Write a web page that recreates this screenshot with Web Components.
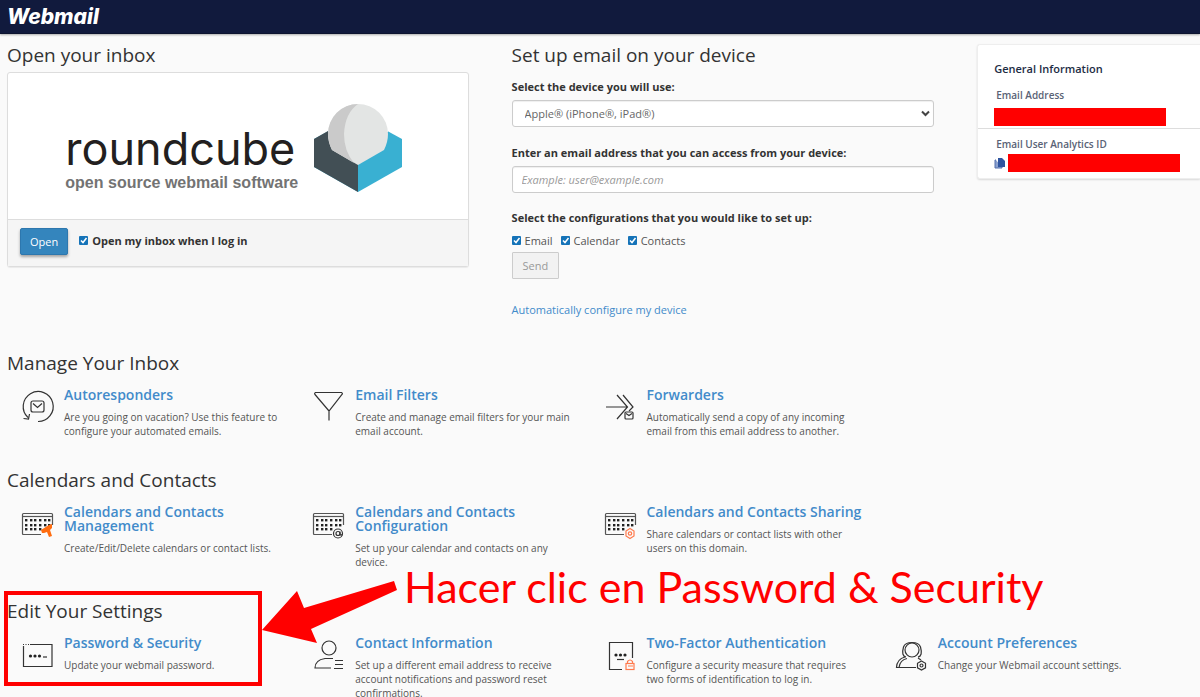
<!DOCTYPE html>
<html lang="en">
<head>
<meta charset="utf-8">
<meta name="viewport" content="width=device-width, initial-scale=1">
<title>Webmail</title>
<style>
html { scrollbar-width: none; }
body { margin: 0; background: #fafafa; color: #333; font: 11px/14px "Open Sans", "Noto Sans", sans-serif; overflow-x: hidden; }
</style>
</head>
<body>
<webmail-app></webmail-app>

<script>
const define = (name, html, setup) => {
  const template = document.createElement('template');
  template.innerHTML = html;
  customElements.define(name, class extends HTMLElement {
    connectedCallback() {
      if (this.shadowRoot) return;
      const root = this.attachShadow({ mode: 'open' });
      root.append(template.content.cloneNode(true));
      if (setup) setup(this, root);
    }
  });
};

/* Dotted calendar sheet shared by the three calendar icons */
const dots = [15, 20, 24].map((y, row) =>
  [5, 10, 14, 19, 24, 28].filter((x) => row < 2 || x < 20)
    .map((x) => `<rect x="${x - 1}" y="${y - 1}" width="2.4" height="2.4" fill="#222" stroke="none"/>`).join('')).join('');
const calendar = `<g stroke="#555"><path d="M20 29.5H2.5q-1 0-1-1V9.500q0-1 1-1h28q1 0 1 1V20"/><path d="M1.500 11.500h30"/></g>${dots}`;

const icons = {
  autoresponder: '<path d="M7 29.500A15 15 0 1 1 17 33.500M2.500 30.500l5 .5 1-5"/><rect x="10" y="13" width="13" height="11" rx="2"/><path d="M12 15.500l4.500 4 4.500-4"/>',
  filter: '<path d="M3.500 4.500h26q1.500 1 .500 2L17 23 3 6.500q-1-1 .5-2zM17 23v9.500"/>',
  forward: '<path d="M2 19h21M13 7l10.500 12L13 31M19 7l10 12-4 4"/><rect x="21" y="24" width="8" height="7" rx="1"/><path d="M22 25.500l3 2 3-2"/>',
  'calendar-manage': calendar + '<path d="M20 25l8-5 3-1v4l-2 2 2 6-3 1-2-5-3 1-2 0z" fill="#ff6c0f" stroke="none"/>',
  'calendar-config': calendar + '<circle cx="26" cy="28.500" r="4.500"/><circle cx="26" cy="28.500" r="2"/><path d="M28 26.500v3q1 1 2 0"/>',
  'calendar-share': calendar + '<g stroke="#ff7a4d"><path d="M26 23.500l4 2.500v5l-4 2.500-4-2.500v-5z"/><circle cx="26" cy="28.500" r="1.700"/></g>',
  password: '<path d="M9 8.500h22v22H2.500V10"/><path d="M2 8.500h7" stroke-dasharray="1 1.500"/><g fill="#222" stroke="none"><circle cx="9.500" cy="20" r="1.600"/><circle cx="14" cy="20" r="1.600"/><circle cx="18.500" cy="20" r="1.600"/></g><path d="M22 21h4"/>',
  contact: '<circle cx="17" cy="12" r="7"/><path d="M19 32H3q0-8 10-9.500h8M23 24.500h8M23 28.500h8M22 32.500h9"/>',
  'two-factor': '<path d="M18 33.500H5.500v-27h23V22"/><g fill="#222" stroke="none"><circle cx="12" cy="19" r="1.600"/><circle cx="16.500" cy="19" r="1.600"/><circle cx="21" cy="19" r="1.600"/></g><path d="M13 23.500h7"/><g stroke="#ff7a4d"><rect x="22" y="27.500" width="8" height="6"/><path d="M23.500 27v-1.500q2.500-3 5 0V27M24 30h5"/></g>',
  preferences: '<circle cx="17" cy="14" r="7"/><path d="M11 21Q6 20 8.500 11 10 6.500 17 6.500T25.500 11Q28 20 23 21M12 22.500Q5 24 4 31.500h17M10 21Q2 23 1.500 31.500H4M23 22l3 2"/><path d="M26.500 25l4 2.300v4.500l-4 2.300-4-2.300v-4.500z"/><circle cx="26.500" cy="29.500" r="1.500"/>'
};

define('app-header', `
<style>
  :host { display: flex; align-items: center; height: 34px; padding: 0 7px; box-sizing: border-box; background: #111a3d; border-bottom: 1px solid #0d1430; box-shadow: 0 1px 2px #aaa; }
  a { color: #fff; text-decoration: none; font: italic 800 21px/30px Inter, "Open Sans", sans-serif; }
</style>
<a href="#">Webmail</a>`);

/* Section heading */
define('page-heading', `
<style>
  :host { display: block; }
  h2 { margin: 0; font-size: 19px; line-height: 22px; font-weight: 400; color: #333; }
</style>
<h2><slot></slot></h2>`);

define('roundcube-logo', `
<style>
  :host { display: flex; justify-content: center; align-items: center; gap: 16px; box-sizing: border-box; padding: 3px 8px 0 0; }
  .words { padding-top: 24px; }
  .name { display: block; color: #231f20; font: 400 45px/46px Inter, sans-serif; }
  .tag { display: block; color: #737373; font: 700 16px/22px "Liberation Sans", sans-serif; }
  svg { display: block; flex: none; }
</style>
<div class="words"><span class="name">roundcube</span><span class="tag">open source webmail software</span></div>
<svg width="88" height="88" viewBox="0 0 88 88" aria-hidden="true">
  <path d="M0 35 44 11 88 35V63L44 88 0 63z" fill="#39b0d2"/>
  <path d="M0 35 14 27 44 60V88L0 63z" fill="#424f55"/>
  <path d="M14 11H74V28H14z" fill="#fff"/>
  <path d="M14 30A30 30 0 0 1 74 30Q74 38 70 46L44 61 18 46Q14 38 14 30z" fill="#e3e5e4"/>
  <path d="M44 0A30 30 0 0 0 14 30Q14 38 18 46L40 59Q30 47 30 30 31 9 44 0z" fill="#cacaca"/>
</svg>`);

define('check-option', `
<style>
  :host { display: inline-flex; }
  label { display: flex; align-items: center; gap: 4px; font-weight: var(--check-weight, 400); }
  input { appearance: none; box-sizing: border-box; width: 9px; height: 9px; margin: 0 0 2px; border-radius: 1px; background: #1573b8 url("data:image/svg+xml,%3Csvg xmlns='http://www.w3.org/2000/svg' viewBox='0 0 9 9'%3E%3Cpath d='M2 4.500l2 2 3.500-4.500' fill='none' stroke='white' stroke-width='1.500'/%3E%3C/svg%3E"); }
  input:not(:checked) { background: #fff; border: 1px solid #888; }
</style>
<label><input type="checkbox" checked><slot></slot></label>`);

define('inbox-card', `
<style>
  :host { display: block; }
  .card { margin-top: 6px; background: #fff; border: 1px solid #ddd; border-radius: 3px; box-shadow: 0 1px 1px #0001; }
  roundcube-logo { min-height: 146px; }
  footer { display: flex; align-items: flex-start; gap: 11px; min-height: 47px; box-sizing: border-box; padding: 8px 12px; background: #f5f5f5; border-top: 1px solid #ddd; }
  button { height: 27px; padding: 0 9px; border: 1px solid #2d77ae; border-radius: 2px; background: #3485bd; color: #fff; font: inherit; box-shadow: 0 2px 3px #0005; }
  check-option { --check-weight: 700; padding-top: 6px; }
</style>
<page-heading>Open your inbox</page-heading>
<div class="card">
  <roundcube-logo></roundcube-logo>
  <footer><button type="button">Open</button><check-option>Open my inbox when I log in</check-option></footer>
</div>`);

define('device-setup', `
<style>
  :host { display: block; }
  form { display: block; margin-top: 14px; }
  .field { display: block; margin-bottom: 19px; }
  .field:last-of-type { margin-bottom: 18px; }
  .name { display: block; margin: 0; font-weight: 700; }
  select, .text { display: block; box-sizing: border-box; width: 100%; height: 27px; margin-top: 6px; border: 1px solid #ccc; border-radius: 3px; background: #fff; color: #666; font: inherit; box-shadow: inset 0 1px 1px #0001; }
  select { appearance: none; padding: 0 24px 0 12px; background: #fff url("data:image/svg+xml,%3Csvg xmlns='http://www.w3.org/2000/svg' width='9' height='7' viewBox='0 0 9 7'%3E%3Cpath d='M1 1.500l3.500 3.500L8 1.500' fill='none' stroke='%23444' stroke-width='2'/%3E%3C/svg%3E") no-repeat right 3px center; }
  .text { padding: 0 9px; }
  .text::placeholder { color: #999; font-style: italic; opacity: 1; }
  fieldset { display: block; margin: 0; padding: 0; border: 0; min-width: 0; }
  legend { padding: 0; font-weight: 700; }
  .options { display: flex; gap: 8px; margin: 9px 0 4px; color: #555; }
  button { display: block; height: 27px; padding: 0 10px; border: 1px solid #ccc; border-radius: 1px; background: #f2f2f2; color: #999; font: inherit; }
  a { display: inline-block; margin-top: 24px; color: #428bca; text-decoration: none; }
</style>
<page-heading>Set up email on your device</page-heading>
<form>
  <div class="field"><label class="name" for="device">Select the device you will use:</label>
    <select id="device"><option>Apple® (iPhone®, iPad®)</option></select></div>
  <div class="field"><label class="name" for="address">Enter an email address that you can access from your device:</label>
    <input class="text" id="address" type="email" placeholder="Example: user@example.com"></div>
  <fieldset><legend>Select the configurations that you would like to set up:</legend>
    <div class="options"><check-option>Email</check-option><check-option>Calendar</check-option><check-option>Contacts</check-option></div>
  </fieldset>
  <button type="button" disabled>Send</button>
  <a href="#">Automatically configure my device</a>
</form>`);

define('general-info', `
<style>
  :host { display: block; background: #fff; border: 1px solid #eee; border-right: 0; border-radius: 3px 0 0 3px; box-shadow: 0 1px 2px #0002; }
  h3 { margin: 0 0 12px; font-size: 11px; line-height: 14px; font-weight: 600; color: #1d2c44; }
  h4 { margin: 0 0 6px 2px; font-size: 10px; line-height: 14px; font-weight: 600; color: #596275; }
  .part { padding: 17px 16px 2px; }
  .part + .part { padding: 8px 16px 6px; border-top: 1px solid #ddd; }
  .part + .part h4 { margin-bottom: 3px; }
  .value { display: flex; align-items: center; gap: 2px; }
  .redacted { flex: 0 1 172px; height: 18px; background: #f00; }
  button { display: block; flex: none; width: 12px; height: 12px; padding: 0; border: 0; background: none; }
  svg { display: block; }
</style>
<div class="part"><h3>General Information</h3><h4>Email Address</h4><div class="value"><span class="redacted"></span></div></div>
<div class="part"><h4>Email User Analytics ID</h4><div class="value">
  <button type="button" aria-label="Copy"><svg width="12" height="12" viewBox="0 0 12 12"><path d="M2 3H1v8h7v-1" fill="#8ba1cf" stroke="#5470ad"/><path d="M4 1h4l3 3v6H4z" fill="#2f559f"/></svg></button>
  <span class="redacted"></span></div></div>`);

/* One feature: icon, linked title, and slotted description */
define('feature-item', `
<style>
  :host { display: grid; grid-template-columns: 34px minmax(0, 1fr); column-gap: 9px; padding: 0 18px 0 13px; }
  svg { display: block; overflow: visible; fill: none; stroke: #333; }
  h3 { margin: 0 0 8px; font-size: 14px; line-height: 14px; font-weight: 600; }
  a { color: #428bca; text-decoration: none; }
  p { margin: 0; font-size: 10px; line-height: 14px; color: #555; }
</style>
<svg width="34" height="36" viewBox="0 0 34 36" stroke-width="1.2" aria-hidden="true"></svg>
<div><h3><a href="#"></a></h3><p><slot></slot></p></div>`, (host, root) => {
  root.querySelector('svg').innerHTML = icons[host.getAttribute('icon')];
  root.querySelector('a').textContent = host.getAttribute('heading');
});

define('feature-section', `
<style>
  :host { display: block; position: relative; margin-bottom: 31px; }
  .items { display: grid; grid-template-columns: repeat(4, minmax(0, 1fr)); margin: 14px 27px 0 1px; }
</style>
<page-heading></page-heading>
<div class="items"><slot></slot></div>
<slot name="note"></slot>`, (host, root) => {
  root.querySelector('page-heading').textContent = host.getAttribute('heading');
});

/* Tutorial callout laid over the settings section */
define('callout-note', `
<style>
  :host { display: block; position: absolute; top: -38px; left: -3px; pointer-events: none; color: #f00; white-space: nowrap; }
  .frame { position: absolute; left: 0; top: 29px; box-sizing: border-box; width: 258px; height: 95px; border: 4px solid #f00; }
  svg { position: absolute; left: 258px; top: 18px; }
  .text { position: absolute; left: 400px; top: 0; font: 400 43px/50px Lato, "Open Sans", sans-serif; }
</style>
<div class="frame"></div>
<svg width="136" height="66" viewBox="0 0 136 66" aria-hidden="true"><path d="M0 50 35 11 42 28 132 1 135 10 49 49 55 63z" fill="#f00"/></svg>
<div class="text"><slot></slot></div>`);

define('webmail-app', `
<style>
  :host { display: block; }
  .top { display: grid; grid-template-columns: 462fr 423fr 223fr; column-gap: 43px; align-items: start; padding: 10px 0 35px 7px; }
  main { padding-left: 7px; }
</style>
<app-header></app-header>
<div class="top">
  <inbox-card></inbox-card>
  <device-setup></device-setup>
  <general-info></general-info>
</div>
<main>
  <feature-section heading="Manage Your Inbox">
    <feature-item icon="autoresponder" heading="Autoresponders">Are you going on vacation? Use this feature to configure your automated emails.</feature-item>
    <feature-item icon="filter" heading="Email Filters">Create and manage email filters for your main email account.</feature-item>
    <feature-item icon="forward" heading="Forwarders">Automatically send a copy of any incoming email from this email address to another.</feature-item>
  </feature-section>
  <feature-section heading="Calendars and Contacts">
    <feature-item icon="calendar-manage" heading="Calendars and Contacts Management">Create/Edit/Delete calendars or contact lists.</feature-item>
    <feature-item icon="calendar-config" heading="Calendars and Contacts Configuration">Set up your calendar and contacts on any device.</feature-item>
    <feature-item icon="calendar-share" heading="Calendars and Contacts Sharing">Share calendars or contact lists with other users on this domain.</feature-item>
  </feature-section>
  <feature-section heading="Edit Your Settings">
    <feature-item icon="password" heading="Password &amp; Security">Update your webmail password.</feature-item>
    <feature-item icon="contact" heading="Contact Information">Set up a different email address to receive account notifications and password reset confirmations.</feature-item>
    <feature-item icon="two-factor" heading="Two-Factor Authentication">Configure a security measure that requires two forms of identification to log in.</feature-item>
    <feature-item icon="preferences" heading="Account Preferences">Change your Webmail account settings.</feature-item>
    <callout-note slot="note">Hacer clic en Password &amp; Security</callout-note>
  </feature-section>
</main>`);
</script>
</body>
</html>
